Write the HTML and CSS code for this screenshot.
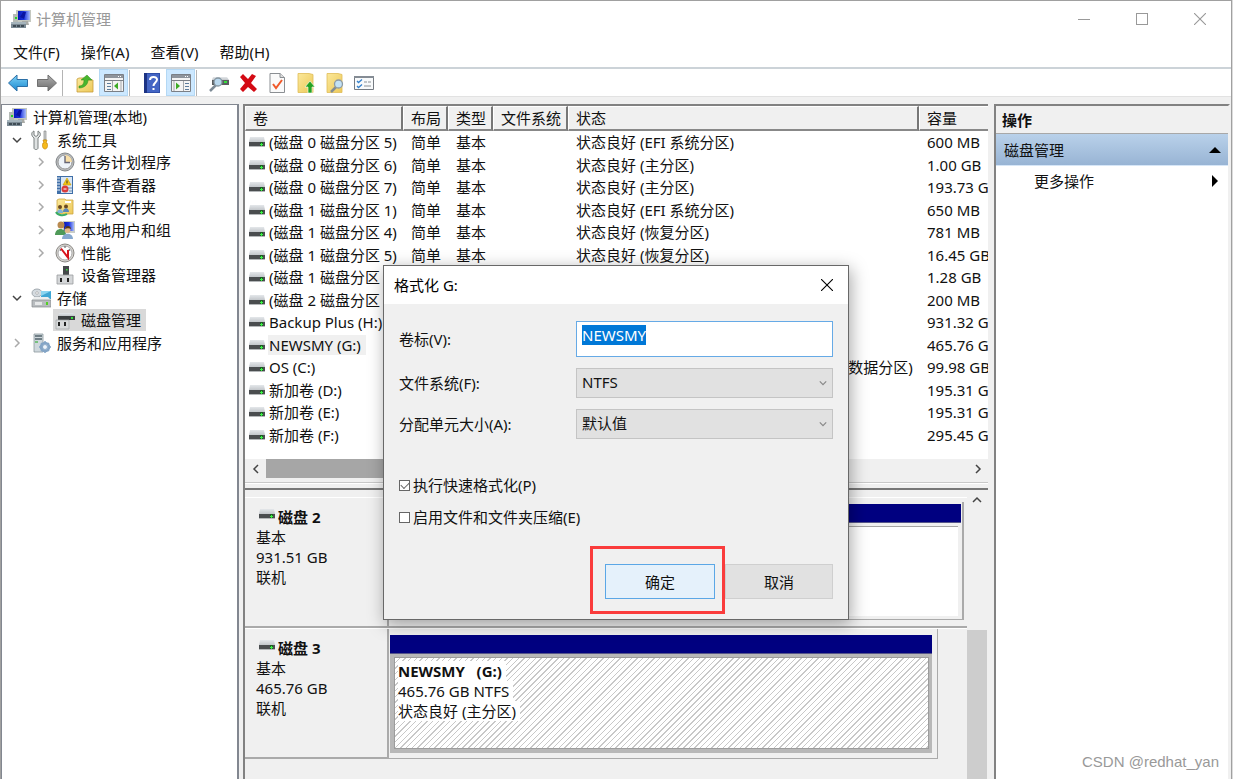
FILE: index.html
```html
<!DOCTYPE html>
<html lang="zh-CN">
<head>
<meta charset="utf-8">
<title>计算机管理</title>
<link rel="stylesheet" href="styles.css">
</head>
<body>
<svg class="sprite" aria-hidden="true">
  <defs>
    <linearGradient id="gBlue" x1="0" y1="0" x2="0" y2="1"><stop offset="0" stop-color="#7fd4f8"/><stop offset="1" stop-color="#1787cf"/></linearGradient>
    <linearGradient id="gGray" x1="0" y1="0" x2="0" y2="1"><stop offset="0" stop-color="#b0b0b0"/><stop offset="1" stop-color="#6c6c6c"/></linearGradient>
    <linearGradient id="gFold" x1="0" y1="0" x2="1" y2="1"><stop offset="0" stop-color="#fbe89a"/><stop offset="1" stop-color="#edc95a"/></linearGradient>
    <linearGradient id="gScreen" x1="0" y1="0" x2="1" y2="0"><stop offset="0" stop-color="#0818b8"/><stop offset="0.5" stop-color="#1c34e0"/><stop offset="1" stop-color="#a8bcf8"/></linearGradient>
    <linearGradient id="gTop" x1="0" y1="0" x2="0" y2="1"><stop offset="0" stop-color="#e4e7ea"/><stop offset="1" stop-color="#c2c6ca"/></linearGradient>
  </defs>
  <symbol id="i-computer" viewBox="0 0 20 20">
    <path d="M5 1h15v12H5z" fill="#c4c8c0"/><path d="M7 2h12v9H7z" fill="url(#gScreen)"/><path d="M9 8l3-5h3l-2 7z" fill="#0a14a0"/>
    <path d="M11 12h6l1 4h-7z" fill="#a8aaa6"/><path d="M2 5h5v9H2z" fill="#b6bbb6"/><path d="M4 8h2v2H4z" fill="#23d02a"/>
    <path d="M0 14h15v5H0z" fill="#7b8a94"/><path d="M0 13h15v2H0z" fill="#a5b4bc"/><path d="M2 16h3v2H2zM6 16h3v2H6zM10 16h3v2h-3z" fill="#3f4c55"/>
  </symbol>
  <symbol id="i-tools" viewBox="0 0 20 20">
    <path d="M3 1v4l2 1.500L7 5V1c2 1 3 3 2 5L7 8v10c0 2-4 2-4 0V8C0 6 0 2 3 1z" fill="#dfe2e2" stroke="#7b8080" stroke-width="1"/>
    <path d="M13 1h2v9h-2z" fill="#d0d3d3" stroke="#777" stroke-width="0.600"/><path d="M12 10h4l-1 3h1c1 2 .6 6-2 6s-3-4-2-6h1z" fill="#f6b91c" stroke="#c78a06" stroke-width="0.700"/>
  </symbol>
  <symbol id="i-clock" viewBox="0 0 20 20">
    <circle cx="10" cy="10" r="9" fill="#b9bcbe" stroke="#83878a"/><circle cx="10" cy="10" r="7" fill="#eef4fa" stroke="#999"/>
    <path d="M10 10V3a7 7 0 0 1 7 7z" fill="#f8dfa8"/><path d="M10 4v6.500h5" fill="none" stroke="#667" stroke-width="1.400"/>
  </symbol>
  <symbol id="i-event" viewBox="0 0 20 20">
    <path d="M2 1h16v18H2z" fill="#3f6fa8"/><path d="M6 2h11v16H6z" fill="#d9e6f4"/><path d="M2 3h3M2 6h3M2 9h3M2 12h3M2 15h3" stroke="#e8eef5"/>
    <path d="M12 3l4 7H8z" fill="#f7c815" stroke="#c29a00" stroke-width="0.600"/><path d="M12 5.500v3" stroke="#333"/><circle cx="10" cy="14" r="3.500" fill="#d93c3c"/><path d="M8.500 14h3" stroke="#fff"/>
    <path d="M13 13h4M14 16h3" stroke="#6a8bb0"/>
  </symbol>
  <symbol id="i-share" viewBox="0 0 20 20">
    <path d="M2 3l2-1h6l1 1h7v14H2z" fill="url(#gFold)" stroke="#cda640" stroke-width="0.800"/><path d="M10 4h6v2h-6z" fill="#fff"/>
    <circle cx="5" cy="10" r="2" fill="#6b4a20"/><circle cx="11" cy="9.500" r="2" fill="#6b4a20"/><path d="M2 16c0-5 6-5 6 0z" fill="#7fb0d8"/><path d="M8 15c0-5 6-5 6 0z" fill="#5c86b8"/><path d="M1 15c2 4 8 4 11 2" stroke="#39ab66" stroke-width="2" fill="none"/>
  </symbol>
  <symbol id="i-users" viewBox="0 0 20 20">
    <path d="M8 1h12v12H8z" fill="#c9cdc8"/><path d="M9 2h10v9H9z" fill="url(#gScreen)"/>
    <circle cx="6" cy="5" r="3.500" fill="#b98a50"/><path d="M0 15c0-8 11-8 11 0z" fill="#4f9a58"/><circle cx="12.500" cy="10" r="3" fill="#e2b98a"/><path d="M10 9c0-4 6-4 6 0-2-1-4-1-6 0z" fill="#5b3a18"/><path d="M7 19c0-7 11-7 11 0z" fill="#86a8cf"/>
  </symbol>
  <symbol id="i-perf" viewBox="0 0 20 20">
    <circle cx="10" cy="10" r="9" fill="#d6d4d0" stroke="#8a8884"/><circle cx="10" cy="10" r="7" fill="#fff" stroke="#aaa"/>
    <path d="M5 8l1-2M9 4h2M14 6l1 2" stroke="#555"/><path d="M6 5.500l7 9V7" fill="none" stroke="#d8141c" stroke-width="2"/>
  </symbol>
  <symbol id="i-device" viewBox="0 0 20 20">
    <path d="M8 1h6v10H8z" fill="#44484a"/><path d="M11 4h1.500v1.500H11z" fill="#36e03c"/><path d="M2 10h16v9H2z" fill="#d4d6d8" stroke="#9a9c9e" stroke-width="0.800"/><path d="M5 13h2v4H5zM12 13h2v4h-2z" fill="#222"/>
  </symbol>
  <symbol id="i-storage" viewBox="0 0 20 20">
    <ellipse cx="6" cy="5" rx="5" ry="4" fill="#d5dbe0" stroke="#8f989e" stroke-width="0.800"/><circle cx="6" cy="5" r="1.300" fill="#fff" stroke="#888" stroke-width="0.500"/>
    <path d="M10 3h10v8H10z" fill="#3fa6d4"/><path d="M10 3h10L10 8z" fill="#8ad4f0"/><path d="M1 12l2-3h14l3 3z" fill="#eceeef"/><path d="M1 12h19v7H1z" fill="#b8bcbf" stroke="#85898c" stroke-width="0.700"/><path d="M4 14h7v3H4z" fill="#e6e8e9"/><path d="M15 14h2v3h-2z" fill="#54d126"/>
  </symbol>
  <symbol id="i-diskmgmt" viewBox="0 0 20 20">
    <path d="M4 3h14l2 3H3z" fill="url(#gTop)"/><path d="M3 6h17v4H3z" fill="#3b3e40"/><path d="M16 7h2v2h-2z" fill="#36e03c"/><path d="M1 10h13v9H1z" fill="#d8dadb" stroke="#a2a4a6" stroke-width="0.700"/><path d="M3 12h2v4H3zM9 12h2v4H9z" fill="#222"/>
  </symbol>
  <symbol id="i-services" viewBox="0 0 20 20">
    <path d="M3 1h9v18H3z" fill="#cfd8dd" stroke="#8e9aa0" stroke-width="0.800"/><path d="M4 3h7M4 6h7" stroke="#52626a" stroke-width="1.300"/><path d="M4 9h3" stroke="#53b857" stroke-width="1.400"/>
    <circle cx="14" cy="14" r="4" fill="none" stroke="#84a5c6" stroke-width="2.600"/><path d="M14 8v12M8 14h12M10 10l8 8M18 10l-8 8" stroke="#84a5c6" stroke-width="1.500"/><circle cx="14" cy="14" r="2" fill="#eef4f9"/>
  </symbol>
  <symbol id="i-drive" viewBox="0 0 16 10">
    <path d="M1 0h14l1 5H0z" fill="url(#gTop)"/><path d="M0 5h16v4H0z" fill="#4a4d4f"/><path d="M0 9h16v1H0z" fill="#b4b7b9"/><path d="M11 5h3v4h-3z" fill="#1d5c22"/><path d="M12 6h1v3h-1zM11 7h3v1h-3z" fill="#3cf046"/>
  </symbol>
  <symbol id="i-back" viewBox="0 0 20 18"><path d="M0.500 9L9 1v4.500h10.500v7H9V17z" fill="url(#gBlue)" stroke="#2b6fa6"/></symbol>
  <symbol id="i-fwd" viewBox="0 0 20 18"><path d="M19.500 9L11 1v4.500H0.500v7H11V17z" fill="url(#gGray)" stroke="#707070"/></symbol>
  <symbol id="i-up" viewBox="0 0 20 20"><path d="M2 6l2-1h5l2 2h7v12H2z" fill="url(#gFold)" stroke="#c79d3a" stroke-width="0.800"/><path d="M4 13c4 0 5-3 5-6H6l6-5 5 5h-4c0 4-3 8-9 8z" fill="#49b52e" stroke="#2f8a1c" stroke-width="0.500"/></symbol>
  <symbol id="i-paneL" viewBox="0 0 20 18"><path d="M.5.500h19v17H.5z" fill="#f4f4f4" stroke="#7a7f86"/><path d="M1 1h18v3H1z" fill="#8e949c"/><path d="M14 2h1v1h-1zM16 2h1v1h-1z" fill="#fff"/><path d="M1 6.500h18" stroke="#7a7f86"/><path d="M3 9.500h4M3 12.500h4M3 15.500h4" stroke="#5c7c9c"/><path d="M8.500 7v10M17 7v10" stroke="#a4a8ac"/><path d="M10 12l4-3.500v7z" fill="#3dab26"/></symbol>
  <symbol id="i-paneR" viewBox="0 0 20 18"><path d="M.5.500h19v17H.5z" fill="#f4f4f4" stroke="#7a7f86"/><path d="M1 1h18v3H1z" fill="#8e949c"/><path d="M14 2h1v1h-1zM16 2h1v1h-1z" fill="#fff"/><path d="M1 6.500h18" stroke="#7a7f86"/><path d="M14 9.500h4M14 12.500h4M14 15.500h4" stroke="#5c7c9c"/><path d="M12.500 7v10M3 7v10" stroke="#a4a8ac"/><path d="M9 12L5 8.500v7z" fill="#3dab26"/></symbol>
  <symbol id="i-help" viewBox="0 0 18 20"><path d="M1 0h16v20H1z" fill="#2f4ea8"/><path d="M1 0h3v20H1z" fill="#1c3384"/><path d="M4 1h12v18H4z" fill="#4365c4"/><path d="M7 7c0-4 7-4 7-.5 0 3-3.500 3-3.500 6.500M10.500 15v2" fill="none" stroke="#fff" stroke-width="2"/></symbol>
  <symbol id="i-find" viewBox="0 0 20 20"><path d="M4 4h14l2 3H3z" fill="url(#gTop)"/><path d="M3 7h17v5H3z" fill="#5a5e60"/><path d="M15 8h3v2h-3z" fill="#36e03c"/><path d="M7 12l-6 6" stroke="#7d8b96" stroke-width="2.500"/><circle cx="9" cy="9" r="4" fill="#b9d8ee" stroke="#8595a0" stroke-width="1.300"/></symbol>
  <symbol id="i-delete" viewBox="0 0 20 20"><path d="M2 4l3-3 5 5 4-5 4 2-5 7 6 6-3 3-6-5-5 5-3-3 5-6z" fill="#d40a14"/></symbol>
  <symbol id="i-check" viewBox="0 0 18 20"><path d="M2 .5h10l4.500 4v15H2z" fill="#fafafa" stroke="#8b8f93"/><path d="M12 .5v4h4.500" fill="#ddd" stroke="#8b8f93"/><path d="M5 11l3 4 6-8" fill="none" stroke="#f0592a" stroke-width="2"/></symbol>
  <symbol id="i-import" viewBox="0 0 20 20"><path d="M2 .5h11l4 1v18H2z" fill="url(#gFold)" stroke="#dfbd58" stroke-width="0.800"/><path d="M12 20v-6H9l5-6 5 6h-3v6z" fill="#26a322" stroke="#fff" stroke-width="0.600"/></symbol>
  <symbol id="i-search" viewBox="0 0 20 20"><path d="M2 .5h11l4 1v18H2z" fill="url(#gFold)" stroke="#dfbd58" stroke-width="0.800"/><path d="M11 14l-5 5" stroke="#848d92" stroke-width="2.500"/><circle cx="13.500" cy="11" r="4" fill="#c3e2f5" stroke="#8d9ba5" stroke-width="1.300"/></symbol>
  <symbol id="i-list" viewBox="0 0 20 16"><path d="M.5 1.500h19v13H.5z" fill="#f8fafb" stroke="#757b82"/><path d="M0 1h20v2H0z" fill="#858c94"/><path d="M3 6l1.500 1.500L8 4.500M3 11l1.500 1.500L8 9.500" fill="none" stroke="#3480cc" stroke-width="1.300"/><path d="M10 7h3M14 7h3M10 11h7" stroke="#8a9095"/></symbol>
  <symbol id="i-x" viewBox="0 0 12 12"><path d="M0 0l12 12M12 0L0 12" fill="none" stroke="currentColor" stroke-width="1.100"/></symbol>
  <symbol id="i-right" viewBox="0 0 10 10"><path d="M3 1l4 4-4 4" fill="none" stroke="currentColor" stroke-width="1.500"/></symbol>
  <symbol id="i-down" viewBox="0 0 10 10"><path d="M1 3l4 4 4-4" fill="none" stroke="currentColor" stroke-width="1.500"/></symbol>
</svg>

<div class="window">
  <header class="titlebar">
    <svg class="icon20"><use href="#i-computer"/></svg>
    <h1 class="title">计算机管理</h1>
    <button class="winbtn" aria-label="最小化"><span class="glyph-min"></span></button>
    <button class="winbtn" aria-label="最大化"><span class="glyph-max"></span></button>
    <button class="winbtn" aria-label="关闭"><svg class="glyph-x"><use href="#i-x"/></svg></button>
  </header>

  <nav class="menubar">
    <button class="menu">文件(F)</button>
    <button class="menu">操作(A)</button>
    <button class="menu">查看(V)</button>
    <button class="menu">帮助(H)</button>
  </nav>

  <div class="toolbar" role="toolbar">
    <button class="tool" aria-label="后退"><svg class="icon20"><use href="#i-back"/></svg></button>
    <button class="tool" aria-label="前进"><svg class="icon20"><use href="#i-fwd"/></svg></button>
    <span class="sep"></span>
    <button class="tool" aria-label="上一级"><svg class="icon20"><use href="#i-up"/></svg></button>
    <button class="tool on" aria-label="控制台树"><svg class="icon20"><use href="#i-paneL"/></svg></button>
    <span class="sep"></span>
    <button class="tool" aria-label="帮助"><svg class="icon20"><use href="#i-help"/></svg></button>
    <button class="tool on" aria-label="操作窗格"><svg class="icon20"><use href="#i-paneR"/></svg></button>
    <span class="sep"></span>
    <button class="tool" aria-label="重新扫描"><svg class="icon20"><use href="#i-find"/></svg></button>
    <button class="tool" aria-label="删除"><svg class="icon20"><use href="#i-delete"/></svg></button>
    <button class="tool" aria-label="属性"><svg class="icon20"><use href="#i-check"/></svg></button>
    <button class="tool" aria-label="打开"><svg class="icon20"><use href="#i-import"/></svg></button>
    <button class="tool" aria-label="浏览"><svg class="icon20"><use href="#i-search"/></svg></button>
    <button class="tool" aria-label="设置"><svg class="icon20"><use href="#i-list"/></svg></button>
  </div>

  <main class="panes">
    <aside class="tree-pane">
      <ul class="tree">
        <li class="node root"><svg class="icon20"><use href="#i-computer"/></svg><span>计算机管理(本地)</span></li>
        <li class="node l1"><span class="twist open"><svg class="chev"><use href="#i-down"/></svg></span><svg class="icon20"><use href="#i-tools"/></svg><span>系统工具</span></li>
        <li class="node l2"><span class="twist"><svg class="chev"><use href="#i-right"/></svg></span><svg class="icon20"><use href="#i-clock"/></svg><span>任务计划程序</span></li>
        <li class="node l2"><span class="twist"><svg class="chev"><use href="#i-right"/></svg></span><svg class="icon20"><use href="#i-event"/></svg><span>事件查看器</span></li>
        <li class="node l2"><span class="twist"><svg class="chev"><use href="#i-right"/></svg></span><svg class="icon20"><use href="#i-share"/></svg><span>共享文件夹</span></li>
        <li class="node l2"><span class="twist"><svg class="chev"><use href="#i-right"/></svg></span><svg class="icon20"><use href="#i-users"/></svg><span>本地用户和组</span></li>
        <li class="node l2"><span class="twist"><svg class="chev"><use href="#i-right"/></svg></span><svg class="icon20"><use href="#i-perf"/></svg><span>性能</span></li>
        <li class="node l2"><span class="twist"></span><svg class="icon20"><use href="#i-device"/></svg><span>设备管理器</span></li>
        <li class="node l1"><span class="twist open"><svg class="chev"><use href="#i-down"/></svg></span><svg class="icon20"><use href="#i-storage"/></svg><span>存储</span></li>
        <li class="node l2"><span class="twist"></span><span class="picked"><svg class="icon20"><use href="#i-diskmgmt"/></svg><span>磁盘管理</span></span></li>
        <li class="node l1"><span class="twist"><svg class="chev"><use href="#i-right"/></svg></span><svg class="icon20"><use href="#i-services"/></svg><span>服务和应用程序</span></li>
      </ul>
    </aside>

    <section class="center">
      <div class="volumes">
        <table class="vol-table">
          <thead>
            <tr><th>卷</th><th>布局</th><th>类型</th><th>文件系统</th><th>状态</th><th>容量</th></tr>
          </thead>
          <tbody>
            <tr><td><svg class="drive"><use href="#i-drive"/></svg><span>(磁盘 0 磁盘分区 5)</span></td><td>简单</td><td>基本</td><td></td><td>状态良好 (EFI 系统分区)</td><td>600 MB</td></tr>
            <tr><td><svg class="drive"><use href="#i-drive"/></svg><span>(磁盘 0 磁盘分区 6)</span></td><td>简单</td><td>基本</td><td></td><td>状态良好 (主分区)</td><td>1.00 GB</td></tr>
            <tr><td><svg class="drive"><use href="#i-drive"/></svg><span>(磁盘 0 磁盘分区 7)</span></td><td>简单</td><td>基本</td><td></td><td>状态良好 (主分区)</td><td>193.73 GB</td></tr>
            <tr><td><svg class="drive"><use href="#i-drive"/></svg><span>(磁盘 1 磁盘分区 1)</span></td><td>简单</td><td>基本</td><td></td><td>状态良好 (EFI 系统分区)</td><td>650 MB</td></tr>
            <tr><td><svg class="drive"><use href="#i-drive"/></svg><span>(磁盘 1 磁盘分区 4)</span></td><td>简单</td><td>基本</td><td></td><td>状态良好 (恢复分区)</td><td>781 MB</td></tr>
            <tr><td><svg class="drive"><use href="#i-drive"/></svg><span>(磁盘 1 磁盘分区 5)</span></td><td>简单</td><td>基本</td><td></td><td>状态良好 (恢复分区)</td><td>16.45 GB</td></tr>
            <tr><td><svg class="drive"><use href="#i-drive"/></svg><span>(磁盘 1 磁盘分区 6)</span></td><td>简单</td><td>基本</td><td></td><td>状态良好 (恢复分区)</td><td>1.28 GB</td></tr>
            <tr><td><svg class="drive"><use href="#i-drive"/></svg><span>(磁盘 2 磁盘分区 1)</span></td><td>简单</td><td>基本</td><td></td><td>状态良好 (EFI 系统分区)</td><td>200 MB</td></tr>
            <tr><td><svg class="drive"><use href="#i-drive"/></svg><span>Backup Plus (H:)</span></td><td>简单</td><td>基本</td><td>NTFS</td><td>状态良好 (主分区)</td><td>931.32 GB</td></tr>
            <tr><td><svg class="drive"><use href="#i-drive"/></svg><span class="current">NEWSMY (G:)</span></td><td>简单</td><td>基本</td><td>NTFS</td><td>状态良好 (主分区)</td><td>465.76 GB</td></tr>
            <tr><td><svg class="drive"><use href="#i-drive"/></svg><span>OS (C:)</span></td><td>简单</td><td>基本</td><td>NTFS</td><td>状态良好 (启动, 页面文件, 故障转储, 基本数据分区)</td><td>99.98 GB</td></tr>
            <tr><td><svg class="drive"><use href="#i-drive"/></svg><span>新加卷 (D:)</span></td><td>简单</td><td>基本</td><td>NTFS</td><td>状态良好 (主分区)</td><td>195.31 GB</td></tr>
            <tr><td><svg class="drive"><use href="#i-drive"/></svg><span>新加卷 (E:)</span></td><td>简单</td><td>基本</td><td>NTFS</td><td>状态良好 (主分区)</td><td>195.31 GB</td></tr>
            <tr><td><svg class="drive"><use href="#i-drive"/></svg><span>新加卷 (F:)</span></td><td>简单</td><td>基本</td><td>NTFS</td><td>状态良好 (主分区)</td><td>295.45 GB</td></tr>
          </tbody>
        </table>
        <div class="hscroll">
          <button class="hbtn" aria-label="向左滚动"><svg class="chev flip"><use href="#i-right"/></svg></button>
          <div class="htrack"><div class="hthumb"></div></div>
          <button class="hbtn" aria-label="向右滚动"><svg class="chev"><use href="#i-right"/></svg></button>
        </div>
      </div>

      <div class="graph">
        <div class="disks">
          <section class="disk">
            <div class="disk-info">
              <h2 class="disk-name"><svg class="drive"><use href="#i-drive"/></svg>磁盘 2</h2>
              <p>基本</p><p>931.51 GB</p><p>联机</p>
            </div>
            <div class="parts wide">
              <div class="part"><div class="part-bar"></div><div class="part-body"></div></div>
            </div>
          </section>
          <section class="disk">
            <div class="disk-info">
              <h2 class="disk-name"><svg class="drive"><use href="#i-drive"/></svg>磁盘 3</h2>
              <p>基本</p><p>465.76 GB</p><p>联机</p>
            </div>
            <div class="parts">
              <div class="part chosen">
                <div class="part-bar"></div>
                <div class="part-body">
                  <p><strong>NEWSMY&nbsp;&nbsp; (G:)</strong></p><p><span>465.76 GB NTFS</span></p><p><span>状态良好 (主分区)</span></p>
                </div>
              </div>
            </div>
          </section>
        </div>
        <div class="vscroll">
          <button class="vbtn" aria-label="向上滚动"><svg class="chev turn"><use href="#i-down"/></svg></button>
          <div class="vthumb"></div>
        </div>
      </div>
    </section>

    <aside class="actions">
      <h2 class="actions-head">操作</h2>
      <button class="group">磁盘管理<span class="tri-up"></span></button>
      <button class="action">更多操作<span class="tri-right"></span></button>
    </aside>
  </main>

  <form class="dialog" role="dialog" aria-labelledby="dlg-title">
    <div class="dlg-head">
      <h2 class="dlg-title" id="dlg-title">格式化 G:</h2>
      <button type="button" class="dlg-close" aria-label="关闭"><svg class="glyph-x"><use href="#i-x"/></svg></button>
    </div>
    <div class="dlg-body">
      <div class="fields">
        <label for="vol">卷标(V):</label><input class="field text" id="vol" type="text" value="NEWSMY">
        <label for="fs">文件系统(F):</label>
        <span class="pick"><select class="field" id="fs"><option>NTFS</option></select><svg class="pick-arrow"><use href="#i-down"/></svg></span>
        <label for="unit">分配单元大小(A):</label>
        <span class="pick"><select class="field" id="unit"><option>默认值</option></select><svg class="pick-arrow"><use href="#i-down"/></svg></span>
      </div>
      <div class="checks">
        <label class="check"><input type="checkbox" checked>执行快速格式化(P)</label>
        <label class="check"><input type="checkbox">启用文件和文件夹压缩(E)</label>
      </div>
      <div class="dlg-buttons">
        <span class="marked"><button type="button" class="btn primary">确定</button></span>
        <button type="button" class="btn">取消</button>
      </div>
    </div>
  </form>
  <div class="watermark">CSDN @redhat_yan</div>
</div>
<script src="app.js"></script>
</body>
</html>
```
FILE: styles.css
```css
* { box-sizing: border-box; }
html, body { height: 100%; }
body {
  margin: 0;
  padding-right: 1px;
  overflow: hidden;
  background: #dcdcdc;
  color: #111;
  font: 15px/20px "Noto Sans", "Noto Sans CJK SC", sans-serif;
}
h1, h2, p, ul { margin: 0; padding: 0; font-size: 15px; }
button, input, select { font: inherit; color: inherit; }
button { padding: 0; border: 0; background: none; }
svg { display: block; flex: none; }
.sprite { position: absolute; width: 0; height: 0; }
.icon20 { width: 20px; height: 20px; }
.chev { width: 10px; height: 10px; }
.flip { transform: scaleX(-1); }
.turn { transform: scaleY(-1); }

.window {
  position: relative;
  display: flex;
  flex-direction: column;
  height: 100%;
  border: 1px solid #a0a0a0;
  border-bottom: 0;
  background: #fff;
}

.titlebar { display: flex; align-items: center; height: 36px; padding: 0 2px 0 10px; color: #999; }
.title { flex: 1; margin-left: 5px; font-weight: 400; }
.winbtn { display: grid; place-items: center; width: 58px; height: 36px; color: #999; }
.glyph-min { width: 12px; height: 1px; background: #999; }
.glyph-max { width: 12px; height: 12px; border: 1px solid #999; }
.glyph-x { width: 12px; height: 12px; }

.menubar { display: flex; gap: 21px; height: 30px; padding-left: 12px; }

.toolbar {
  display: flex;
  align-items: center;
  height: 30px;
  padding-left: 2px;
  border-top: 2px solid #ccd3d8;
  border-bottom: 1px solid #e2e2e2;
}
.tool { display: grid; place-items: center; width: 29px; height: 27px; }
.tool.on { background: #cce8ff; border: 1px solid #b4d8f4; }
.sep { width: 1px; height: 26px; margin: 0 7px 0 1px; background: #b4b4b4; }

.panes { display: flex; flex: 1; min-height: 0; padding-top: 7px; background: #f0f0f0; }

.tree-pane { flex: none; width: 238px; border: 1px solid #828790; border-right-width: 2px; border-bottom: 0; background: #fff; }
.tree { display: grid; grid-template-rows: repeat(11, 1fr); height: 249px; padding-top: 1px; list-style: none; white-space: nowrap; }
.node { display: flex; align-items: center; gap: 6px; }
.node.root { padding-left: 5px; }
.node.l1 { padding-left: 3px; }
.node.l2 { padding-left: 27px; }
.twist { display: grid; place-items: center; width: 24px; margin-right: -4px; color: #aaa; }
.twist.open { color: #444; }
.picked { display: flex; align-items: center; gap: 6px; height: 22px; margin-left: -2px; padding: 0 5px 0 2px; background: #d9d9d9; }

.center {
  display: flex;
  flex: 1;
  flex-direction: column;
  min-width: 0;
  margin-left: 4px;
  border-top: 2px solid #828282;
  border-left: 2px solid #828282;
}
.volumes { overflow: hidden; flex: none; border-bottom: 2px solid #777; background: #fff; }
.vol-table, .vol-table thead { display: block; }
.vol-table tr { display: grid; grid-template-columns: 158px 45px 45px 75px minmax(351px, 1fr) 69px; white-space: nowrap; }
.vol-table th {
  height: 25px;
  padding: 0 0 0 7px;
  border: 1px solid #fff;
  border-right: 2px solid #777;
  border-bottom: 2px solid #888;
  background: #f0f0f0;
  font-weight: 400;
  line-height: 22px;
  text-align: left;
}
.vol-table th:last-child { border-right: 0; }
.vol-table tbody { display: grid; grid-template-rows: repeat(14, 1fr); height: 315px; }
.vol-table td { display: flex; overflow: hidden; align-items: center; padding: 0 0 0 8px; }
.vol-table td:first-child { gap: 3px; padding-left: 4px; }
.vol-table td:first-child span { padding: 0 5px 0 1px; }
.vol-table .current { background: #f0f0f0; }
.drive { width: 16px; height: 10px; }

.hscroll { display: flex; height: 24px; margin-top: 13px; padding-bottom: 4px; border-bottom: 1px solid #c8c8c8; background: #f0f0f0; color: #444; }
.hbtn { display: grid; place-items: center; width: 21px; height: 19px; }
.htrack { flex: 1; }
.hthumb { width: 62%; height: 19px; background: #a6a6a6; }
.volumes::after { content: ""; display: block; height: 4px; background: #f0f0f0; border-top: 1px solid #fff; }

.graph { display: flex; flex: 1; min-height: 0; background: #f0f0f0; }
.disks { flex: 1; padding-top: 7px; }
.disk { display: flex; height: 131px; border-top: 1px solid #fff; border-bottom: 2px solid #aaa; }
.disk + .disk { border-bottom: 0; }
.disk-info { flex: none; width: 144px; padding: 8px 0 0 11px; border-right: 2px solid #aaa; }
.disk + .disk .disk-info { border-bottom: 2px solid #aaa; }
.disk-name { display: flex; align-items: center; gap: 3px; height: 21px; padding-left: 3px; font-weight: 700; }
.disk-name .drive { margin-bottom: 6px; }
.parts { flex: 1; margin-right: 29px; padding: 6px 5px 5px 1px; border-right: 1px solid #aaa; border-bottom: 1px solid #aaa; }
.parts.wide { margin: 4px 3px 6px 0; padding: 2px 1px 3px 1px; border-right: 2px solid #aaa; }
.part { display: flex; flex-direction: column; height: 100%; }
.part-bar { height: 19px; background: #000080; border-bottom: 1px solid #55558a; }
.part-body { flex: 1; margin: 3px 3px 0 0; border-top: 1px solid #a4a4a4; background: #fff; }
.part.chosen { background: #b8b8b8; }
.chosen .part-body {
  margin: 3px 3px 4px 4px;
  padding: 3px 3px;
  border: 1px solid #9c9c9c;
  background: repeating-linear-gradient(135deg, #fff 0 3px, #c8c8c8 3px 4px);
}
.chosen p { height: 20px; }
.chosen p > * { display: inline-block; padding-right: 4px; background: #fff; }

.vscroll { display: flex; flex-direction: column; width: 20px; margin-right: 1px; color: #444; }
.vbtn { display: grid; place-items: center; height: 20px; }
.vthumb { flex: 1; margin-top: 120px; background: #cdcdcd; }

.actions {
  flex: none;
  width: 236px;
  margin: 0 1px 0 6px;
  border-top: 2px solid #828282;
  border-left: 2px solid #828282;
  border-right: 2px solid #f0f0f0;
  background: #fff;
}
.actions-head { height: 28px; padding: 4px 6px; border-bottom: 1px solid #a8a8a8; background: #f0f0f0; }
.group, .action { display: flex; align-items: center; justify-content: space-between; width: 100%; height: 32px; padding: 0 7px 0 8px; }
.group { border-bottom: 1px solid #d6e6f7; background: linear-gradient(#b9d1ea, #98b4d4); }
.action { height: 30px; padding: 0 10px 0 38px; }
.tri-up { border: 6px solid transparent; border-top: 0; border-bottom-color: #000; }
.tri-right { border: 6px solid transparent; border-right: 0; border-left-color: #000; }

.dialog {
  position: absolute;
  top: 264px;
  left: 382px;
  width: 466px;
  border: 1px solid #686868;
  background: #f0f0f0;
  box-shadow: 2px 4px 16px rgba(0, 0, 0, 0.35);
}
.dlg-head { display: flex; align-items: center; justify-content: space-between; height: 38px; padding: 0 15px 0 10px; background: #fff; color: #000; }
.dlg-title { font-weight: 400; }
.dlg-close { display: block; }
.dlg-body { padding: 17px 15px 20px; }
.fields { display: grid; grid-template-columns: 177px 1fr; grid-template-rows: 36px 30px 30px; row-gap: 11px; align-items: center; }
.field { width: 100%; height: 30px; margin: 0; padding: 0 5px 2px; border: 1px solid #c4c4c4; border-radius: 0; background: #e1e1e1; appearance: none; }
.field.text { height: 36px; padding: 0 5px 8px; border-color: #66aae6; outline: 0; background: #fff; }
.field.text::selection { background: #0078d7; color: #fff; }
.pick { position: relative; display: block; }
.pick-arrow { position: absolute; top: 11px; right: 6px; width: 8px; height: 8px; color: #888; pointer-events: none; }
.checks { display: grid; gap: 12px; margin-top: 36px; }
.check { display: flex; align-items: center; gap: 3px; }
.check input { display: grid; place-items: center; width: 11px; height: 11px; margin: 0; border: 1px solid #666; background: #fff; appearance: none; }
.check input:checked::before { content: ""; width: 7px; height: 4px; margin-bottom: 2px; border: solid #666; border-width: 0 0 1px 1px; transform: rotate(-45deg); }
.dlg-buttons { display: flex; justify-content: flex-end; gap: 10px; margin-top: 37px; }
.btn { width: 108px; height: 35px; border: 1px solid #cfcfcf; background: #e1e1e1; }
.btn.primary { width: 110px; border-color: #5ba7e6; background: #e5f1fb; }
.marked { position: relative; display: block; }
.marked::after { content: ""; position: absolute; inset: -18px -10px -15px -15px; border: 3px solid #fa3c3c; pointer-events: none; }

.watermark { position: absolute; right: 12px; bottom: 7px; color: #999; font-family: "Liberation Sans", sans-serif; }
```
FILE: app.js
```js
const volumeLabel = document.getElementById("vol");
volumeLabel.focus();
volumeLabel.select();
```
